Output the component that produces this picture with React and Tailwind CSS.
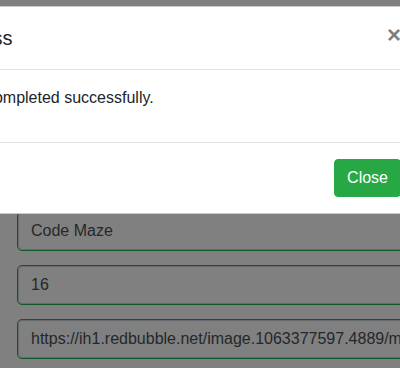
import React from "react";

const fields = ["Code Maze", "16", "https://ih1.redbubble.net/image.1063377597.4889/mp,504x498,matte,f8f8f8,t-pad,600x600,f8f8f8.jpg"];

export default function App() {
  return (
    <div
      className="relative w-[400px] h-[368px] overflow-hidden bg-[#808080]"
      style={{ fontFamily: '"Liberation Sans", Arial, sans-serif' }}
    >
      {/* page behind the backdrop (already dimmed) */}
      <div className="pt-[212px] pl-[18px]">
        {fields.map((value) => (
          <div key={value} className="mb-4">
            <div className="w-[500px] h-[38px] border border-[#676a6d] rounded-[4px] outline outline-[#135828] px-3 text-[16px] leading-[36px] text-[#24282b] whitespace-nowrap overflow-hidden">
              {value}
            </div>
          </div>
        ))}
      </div>

      {/* modal */}
      <div className="absolute left-[-80px] top-[6px] w-[498px] bg-white border border-black/20 rounded-[5px] text-[#212529]">
        <div className="flex items-start p-4 border-b border-[#dee2e6]">
          <h5 className="text-[20px] leading-[30px] font-medium">Success</h5>
          <button className="ml-auto -m-4 p-4 text-[24px] font-bold leading-none text-black opacity-50">
            ×
          </button>
        </div>
        <div className="p-4">
          <p className="mb-4 text-[16px] leading-6">Action completed successfully.</p>
        </div>
        <div className="flex justify-end p-4 border-t border-[#dee2e6]">
          <button className="px-3 py-1.5 text-[16px] leading-6 text-white bg-[#28a745] border border-[#28a745] rounded-[4px]">
            Close
          </button>
        </div>
      </div>
    </div>
  );
}
